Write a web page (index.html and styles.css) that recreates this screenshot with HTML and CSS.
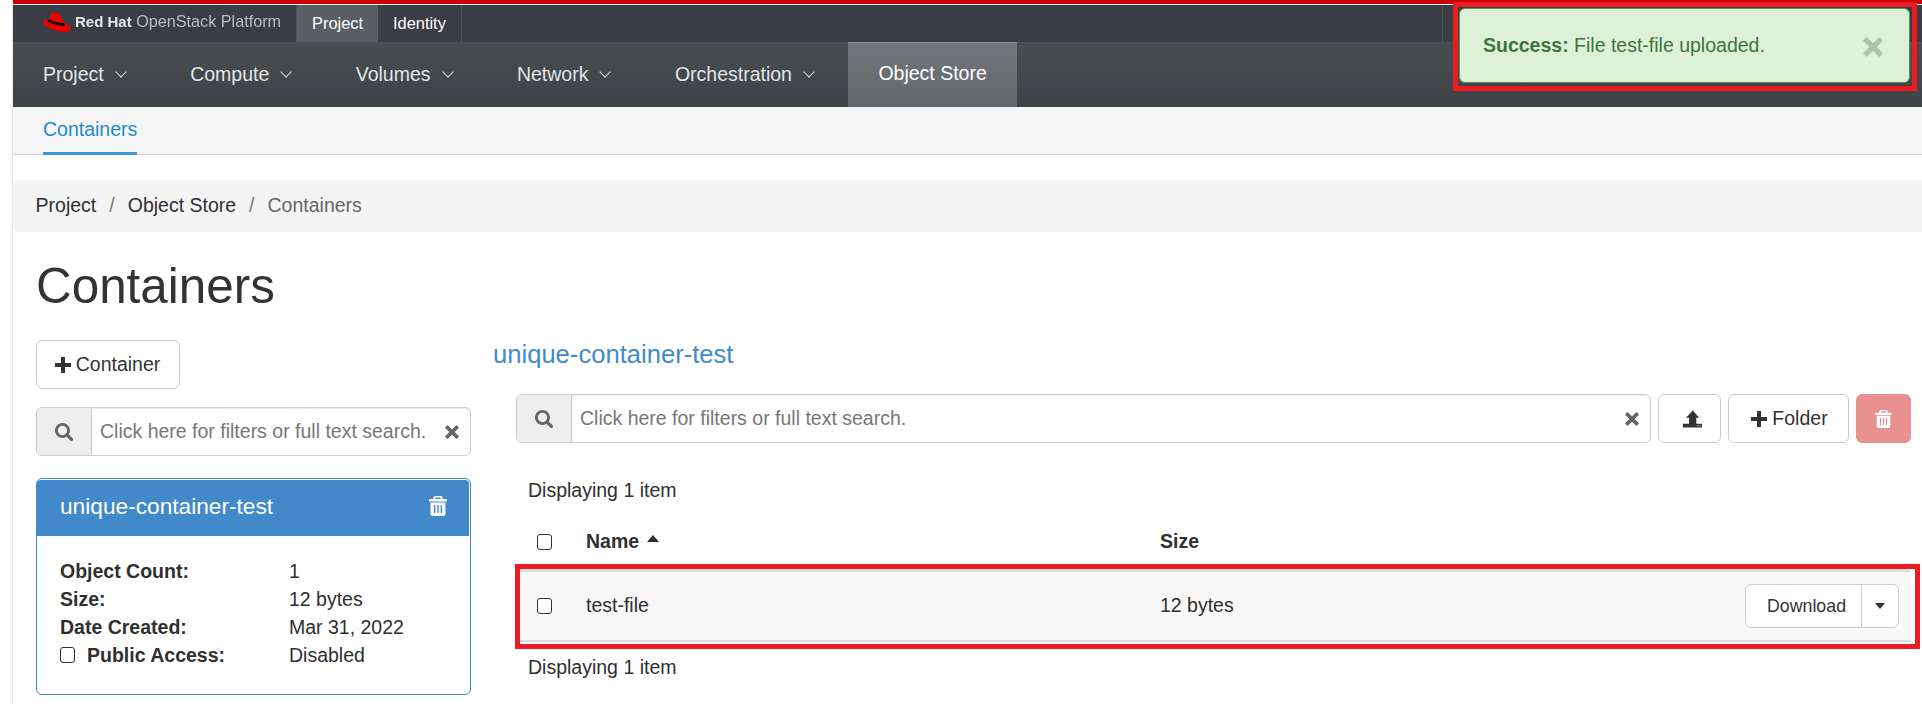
FILE: index.html
```html
<!DOCTYPE html>
<html lang="en">
<head>
<meta charset="utf-8">
<title>Containers</title>
<link rel="stylesheet" href="styles.css">
</head>
<body>
<svg class="defs" width="0" height="0" aria-hidden="true">
  <symbol id="i-plus" viewBox="0 0 16 16"><path d="M6 0h4v6h6v4h-6v6H6v-6H0V6h6z"/></symbol>
  <symbol id="i-x" viewBox="0 0 16 16"><path d="M3.6 .6 8 5l4.400-4.400a1 1 0 0 1 1.400 0l1.600 1.600a1 1 0 0 1 0 1.400L11 8l4.400 4.400a1 1 0 0 1 0 1.400l-1.600 1.600a1 1 0 0 1-1.400 0L8 11l-4.400 4.400a1 1 0 0 1-1.400 0L.6 13.800a1 1 0 0 1 0-1.400L5 8 .6 3.600a1 1 0 0 1 0-1.400L2.200 .6a1 1 0 0 1 1.400 0z"/></symbol>
  <symbol id="i-search" viewBox="0 0 18 18"><path fill-rule="evenodd" d="M7.500 0a7.500 7.500 0 0 1 6.300 11.500l3.800 3.800a1.600 1.600 0 0 1-2.300 2.300l-3.800-3.800A7.500 7.500 0 1 1 7.500 0zm0 2.800a4.700 4.700 0 1 0 0 9.400 4.700 4.700 0 0 0 0-9.400z"/></symbol>
  <symbol id="i-trash" viewBox="0 0 18 20"><path fill-rule="evenodd" d="M6 0h6a1.500 1.500 0 0 1 1.500 1.500V3H17a1 1 0 0 1 1 1v1.500H0V4a1 1 0 0 1 1-1h3.500V1.500A1.500 1.500 0 0 1 6 0zm.5 1.500V3h5V1.500zM1.500 6.500h15V18a2 2 0 0 1-2 2h-11a2 2 0 0 1-2-2zM5 9v8h1.300V9zm3.300 0v8h1.400V9zm3.400 0v8H13V9z"/></symbol>
  <symbol id="i-upload" viewBox="0 0 20 18"><path fill-rule="evenodd" d="M10.300 0 17 7.800h-3V14h6v4H0v-4h6.400V7.800H3.200zM15 15.500v1h1v-1zm2.500 0v1h1v-1z"/></symbol>
</svg>

<div class="page">
  <header class="masthead">
    <div class="topbar">
      <div class="brand">
        <svg class="hat" viewBox="0 0 28 20" aria-hidden="true">
          <path fill="#e00" d="M6 8 7.500 2.500C8.500.5 11 0 14 1c2.500.7 3.500 2 4 3.500L21 11c3 1 6.500 2.500 6.500 5 0 2.500-2.500 4-6 4C14 20 3 15 .5 12-.3 10.800.5 8.500 2.500 7.500z"/>
          <path fill="#111" d="M6 7c4 2.500 10 4 15 4l1.500 3C16 14 9 12 4.500 9.500z"/>
        </svg>
        <span class="brand-text"><b>Red Hat</b> OpenStack Platform</span>
      </div>
      <nav class="dash-tabs">
        <a class="dash-tab is-active">Project</a>
        <a class="dash-tab">Identity</a>
      </nav>
      <div class="topbar-end"></div>
    </div>
    <nav class="mainnav">
      <a class="nav-item">Project<i class="chev"></i></a>
      <a class="nav-item">Compute<i class="chev"></i></a>
      <a class="nav-item">Volumes<i class="chev"></i></a>
      <a class="nav-item">Network<i class="chev"></i></a>
      <a class="nav-item">Orchestration<i class="chev"></i></a>
      <a class="nav-item is-current">Object Store</a>
    </nav>
  </header>

  <div class="subnav"><a class="subnav-tab">Containers</a></div>

  <ol class="crumbs">
    <li>Project</li>
    <li class="sep">/</li>
    <li>Object Store</li>
    <li class="sep">/</li>
    <li class="crumb-last">Containers</li>
  </ol>

  <h1 class="page-title">Containers</h1>

  <main class="columns">
    <aside class="side">
      <button class="btn btn-container"><svg class="ico ico-plus"><use href="#i-plus"/></svg>Container</button>
      <div class="search search-side">
        <span class="search-addon"><svg class="ico ico-search"><use href="#i-search"/></svg></span>
        <input class="search-input" placeholder="Click here for filters or full text search.">
        <svg class="ico ico-x"><use href="#i-x"/></svg>
      </div>
      <section class="card">
        <div class="card-head">
          <span class="card-name">unique-container-test</span>
          <svg class="ico ico-trash"><use href="#i-trash"/></svg>
        </div>
        <div class="card-body">
          <div class="meta-row"><b>Object Count:</b><span>1</span></div>
          <div class="meta-row"><b>Size:</b><span>12 bytes</span></div>
          <div class="meta-row"><b>Date Created:</b><span>Mar 31, 2022</span></div>
          <div class="meta-row"><b class="meta-check"><input type="checkbox" class="check">Public Access:</b><span>Disabled</span></div>
        </div>
      </section>
    </aside>

    <section class="detail">
      <h2 class="detail-title">unique-container-test</h2>
      <div class="toolbar">
        <div class="search search-main">
          <span class="search-addon"><svg class="ico ico-search"><use href="#i-search"/></svg></span>
          <input class="search-input" placeholder="Click here for filters or full text search.">
          <svg class="ico ico-x"><use href="#i-x"/></svg>
        </div>
        <button class="btn btn-upload"><svg class="ico ico-upload"><use href="#i-upload"/></svg></button>
        <button class="btn btn-folder"><svg class="ico ico-plus"><use href="#i-plus"/></svg>Folder</button>
        <button class="btn btn-delete"><svg class="ico ico-trash"><use href="#i-trash"/></svg></button>
      </div>
      <div class="count">Displaying 1 item</div>
      <div class="tbl-row tbl-head">
        <span class="tbl-check"><input type="checkbox" class="check"></span>
        <span>Name<i class="sort-up"></i></span>
        <span>Size</span>
      </div>
      <div class="tbl-row tbl-item">
        <span class="tbl-check"><input type="checkbox" class="check"></span>
        <span class="tbl-text">test-file</span>
        <span class="tbl-text">12 bytes</span>
        <div class="split">
          <button class="split-main">Download</button>
          <button class="split-toggle"><i class="caret"></i></button>
        </div>
        <div class="mark mark-row"></div>
      </div>
      <div class="count count-bottom">Displaying 1 item</div>
    </section>
  </main>

  <div class="mark mark-toast"></div>
  <div class="toast">
    <span><b>Success:</b> File test-file uploaded.</span>
    <svg class="ico ico-toast-x"><use href="#i-x"/></svg>
  </div>
</div>
</body>
</html>
```
FILE: styles.css
```css
* { box-sizing: border-box; }
html, body { margin: 0; padding: 0; height: 704px; overflow: hidden; background: #fff; }
body { font-family: "Liberation Sans", Arial, sans-serif; font-size: 19.5px; color: #2f2f2f; }
.defs { position: absolute; }
.page { height: 704px; margin-left: 12px; border-left: 1px solid #e8e8e8; }
.ico { display: block; fill: currentColor; flex: none; }

/* masthead */
.masthead { border-top: 4px solid #cc0000; }
.topbar { display: flex; height: 39px; border-top: 1px solid #fff; border-bottom: 1px solid #4f5256; background: #3a3d44; }
.brand { display: flex; align-items: flex-start; width: 284px; padding: 7px 0 0 30px; border-right: 1px solid #4f5256; }
.hat { display: block; width: 28px; height: 20px; flex: none; }
.brand-text { margin: -1px 0 0 4px; font-size: 16.200px; line-height: 20px; color: #b9bbbd; white-space: nowrap; filter: blur(.4px); }
.brand-text b { color: #e4e4e4; font-size: 15px; }
.dash-tabs { display: flex; height: 37px; }
.dash-tab { display: flex; align-items: center; padding: 0 15px; font-size: 16.400px; color: #fff; }
.dash-tab.is-active { background: #5a5e62; }
.dash-tab:last-child { border-right: 1px solid #4f5256; }
.topbar-end { margin-left: 980px; width: 1px; height: 37px; background: #4f5256; }

.mainnav { display: flex; height: 64px; background: linear-gradient(#4a4d50, #3f4246); }
.nav-item { display: flex; align-items: center; padding: 0 30px 2px; color: #e2e3e4; white-space: nowrap; }
.nav-item.is-current { margin-top: -1px; height: 65px; background: linear-gradient(#727579, #64676a); border-top: 1px solid #8a8c8f; color: #fff; padding-bottom: 3px; }
.chev { display: block; width: 8px; height: 8px; margin: -4px 5.450px 0 13px; border-right: 1.500px solid #d6d7d8; border-bottom: 1.500px solid #d6d7d8; transform: rotate(45deg); }

/* sub navigation */
.subnav { display: flex; height: 48px; padding-left: 30px; background: #f5f5f5; border-bottom: 1px solid #cdcdcd; }
.subnav-tab { display: block; height: 48px; padding-top: 11px; color: #1f8ccb; border-bottom: 3px solid #3b9ad3; }

/* breadcrumb */
.crumbs { display: flex; align-items: center; height: 52px; margin: 25px 0 0; padding: 0 0 2px 22.600px; list-style: none; background: #f4f4f4; border-radius: 5px 0 0 5px; }
.crumbs .sep { padding: 0 13px; color: #777; }
.crumb-last { color: #666; }

.page-title { height: 108px; margin: 0; padding: 26px 0 0 23px; font-size: 49.400px; font-weight: 400; line-height: 56px; color: #333; }

/* columns */
.columns { display: flex; gap: 22px; padding: 0 11px 0 23px; }
.side { width: 435px; flex: none; }
.detail { flex: 1; min-width: 0; }

/* buttons */
.btn { display: flex; align-items: center; justify-content: center; height: 49px; padding: 0; font: inherit; color: #333; background: #fff; border: 1px solid #ccc; border-radius: 6px; }
.ico-plus { width: 16px; height: 16px; margin-right: 5px; }
.btn-container { width: 144px; padding-right: 1px; }
.btn-upload { width: 63px; margin-left: 7px; padding-left: 5px; }
.ico-upload { width: 19px; height: 18px; }
.btn-folder { width: 121px; margin-left: 7px; padding-left: 2px; }
.btn-delete { width: 55px; margin-left: 7px; color: #fff; background: #e89190; border-color: #e89190; }
.btn-delete .ico-trash { width: 17px; height: 18px; margin-top: 0; }

/* search */
.search { display: flex; align-items: center; height: 49px; background: #fff; border: 1px solid #ccc; border-radius: 6px; box-shadow: inset 0 1px 1px rgba(0,0,0,.08); }
.search-side { margin-top: 18px; }
.search-main { flex: 1; min-width: 0; }
.search-addon { display: flex; align-items: center; justify-content: center; width: 55px; height: 47px; flex: none; color: #666; background: #eee; border-right: 1px solid #ccc; border-radius: 5px 0 0 5px; }
.ico-search { width: 18px; height: 18px; }
.search-input { flex: 1; min-width: 0; height: 40px; padding: 0 0 0 8px; font: inherit; color: #333; background: transparent; border: 0; outline: 0; }
.search-input::placeholder { color: #777; opacity: 1; }
.ico-x { width: 14px; height: 14px; margin: 0 11px 0 4px; color: #666; }

/* card */
.card { height: 217px; margin-top: 22px; border: 1px solid #428bca; border-radius: 6px; padding: 1px 1px 0 0; }
.card-head { display: flex; align-items: center; justify-content: space-between; height: 56px; padding: 0 22px 4px 23px; font-size: 22.700px; color: #fff; background: #4289ca; border-radius: 4px 4px 0 0; }
.ico-trash { width: 18px; height: 20px; }
.card-body { padding: 20.500px 0 0 23px; }
.meta-row { display: grid; grid-template-columns: 229px 1fr; height: 28px; line-height: 28px; }
.meta-check { display: flex; align-items: center; }

/* checkbox */
.check { display: block; width: 15px; height: 16px; margin: 0; flex: none; appearance: none; background: #fff; border: 1.500px solid #333; border-radius: 3px; }
.meta-check .check { margin-right: 12px; }

/* detail */
.detail-title { height: 28px; margin: 0; font-size: 25.600px; font-weight: 400; line-height: 28px; color: #428bca; }
.toolbar { display: flex; height: 49px; margin: 26px 0 0 23px; }
.count { height: 28px; margin: 33px 0 0 35px; line-height: 28px; }
.count-bottom { margin-top: 11px; }

.tbl-row { position: relative; display: grid; grid-template-columns: 70px 574px 1fr; align-items: center; margin-left: 23px; }
.tbl-check { padding-left: 21px; }
.tbl-head { height: 53px; margin-top: 12px; font-weight: 700; padding-bottom: 2px; }
.tbl-item { height: 73px; background: #f8f8f8; border-top: 3px solid #ddd; border-bottom: 2px solid #ddd; }
.tbl-text { margin-top: -2px; }
.sort-up { display: inline-block; margin: 0 0 8px 8px; vertical-align: middle; border: 6px solid transparent; border-top: 0; border-bottom: 7px solid #2f2f2f; }

/* split button */
.split { position: absolute; top: 12px; right: 12px; display: flex; height: 44px; font-size: 17.800px; background: #fff; border: 1px solid #ccc; border-radius: 6px; }
.split-main, .split-toggle { padding: 0; font: inherit; color: #333; background: transparent; border: 0; }
.split-main { width: 116px; padding-left: 6px; border-right: 1px solid #ccc; }
.split-toggle { display: flex; align-items: center; justify-content: center; width: 36px; }
.caret { display: block; border: 5.500px solid transparent; border-bottom: 0; border-top: 6px solid #333; }

/* annotation frames */
.mark { position: absolute; border: 5px solid #ed1c24; pointer-events: none; }
.mark-row { top: -8px; left: -1px; right: -9px; bottom: -9px; }
.mark-toast { top: 2px; left: 1453px; width: 464px; height: 89px; }

/* toast */
.toast { position: absolute; top: 8px; left: 1459px; display: flex; align-items: center; justify-content: space-between; width: 451px; height: 75px; padding: 0 26px 1px 23px; color: #3c763d; background: #dff0d8; border: 1px solid #4a9c4a; border-radius: 6px; }
.ico-toast-x { width: 20px; height: 20px; margin-top: 4px; color: #b3c0ac; }
```
